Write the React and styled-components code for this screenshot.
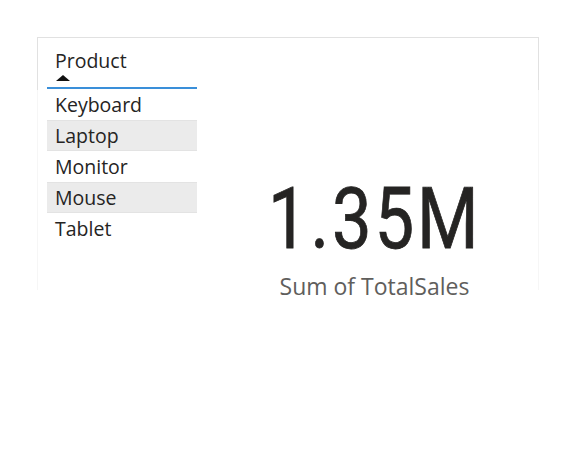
import React from 'react';
import styled, { createGlobalStyle } from 'styled-components';

const GlobalStyle = createGlobalStyle`
  html, body {
    margin: 0;
    padding: 0;
    background: #ffffff;
  }
  body {
    font-family: "Open Sans", "Noto Sans", sans-serif;
    color: #252423;
  }
`;

const Page = styled.div`
  width: 575px;
  height: 450px;
  padding: 37px 0 0 37px;
  box-sizing: border-box;
`;

const Frame = styled.div`
  width: 502px;
  height: 253px;
  box-sizing: border-box;
  border: 1px solid transparent;
  border-bottom: none;
  border-image: linear-gradient(to bottom, #e1e1e1 0, #e1e1e1 53px, #f6f6f6 53px, #f6f6f6 100%) 1;
  display: flex;
`;

const Slicer = styled.div`
  width: 150px;
  margin-left: 9px;
  display: flex;
  flex-direction: column;
`;

const SlicerHeader = styled.div`
  height: 51px;
  padding-left: 8px;
  border-bottom: 2px solid #3a8fd9;
  box-sizing: border-box;
  display: flex;
  flex-direction: column;
  justify-content: flex-end;
`;

const HeaderTitle = styled.div`
  font-size: 19.5px;
  line-height: 24px;
  color: #252423;
`;

const SortArrow = styled.div`
  width: 0;
  height: 0;
  margin: 2px 0 6px 1px;
  border-left: 7px solid transparent;
  border-right: 7px solid transparent;
  border-bottom: 6px solid #111111;
`;

const List = styled.div`
  display: flex;
  flex-direction: column;
`;

const Item = styled.div`
  height: 31px;
  box-sizing: border-box;
  padding-left: 8px;
  display: flex;
  align-items: center;
  font-size: 19.5px;
  color: #252423;
  background: ${(p) => (p.$shaded ? '#ebebeb' : '#ffffff')};
  border-top: 1px solid ${(p) => (p.$shaded ? '#e3e3e3' : 'transparent')};
  border-bottom: 1px solid ${(p) => (p.$shaded ? '#e3e3e3' : 'transparent')};
`;

const Card = styled.div`
  flex: 1;
  display: flex;
  flex-direction: column;
  align-items: center;
  padding-top: 139px;
  padding-left: 14px;
`;

const Value = styled.div`
  font-family: Roboto, "DejaVu Sans", sans-serif;
  font-size: 85px;
  line-height: 85px;
  color: #252423;
  letter-spacing: 3.5px;
  -webkit-text-stroke: 0.8px #252423;
  transform: scaleX(0.83);
`;

const Caption = styled.div`
  margin-top: 8px;
  font-size: 23px;
  color: #605e5c;
`;

const products = ['Keyboard', 'Laptop', 'Monitor', 'Mouse', 'Tablet'];

const App = () => {
  return (
    <Page>
      <GlobalStyle />
      <Frame>
        <Slicer>
          <SlicerHeader>
            <HeaderTitle>Product</HeaderTitle>
            <SortArrow />
          </SlicerHeader>
          <List>
            {products.map((name, i) => (
              <Item key={name} $shaded={i % 2 === 1}>
                {name}
              </Item>
            ))}
          </List>
        </Slicer>
        <Card>
          <Value>1.35M</Value>
          <Caption>Sum of TotalSales</Caption>
        </Card>
      </Frame>
    </Page>
  );
};

export default App;
